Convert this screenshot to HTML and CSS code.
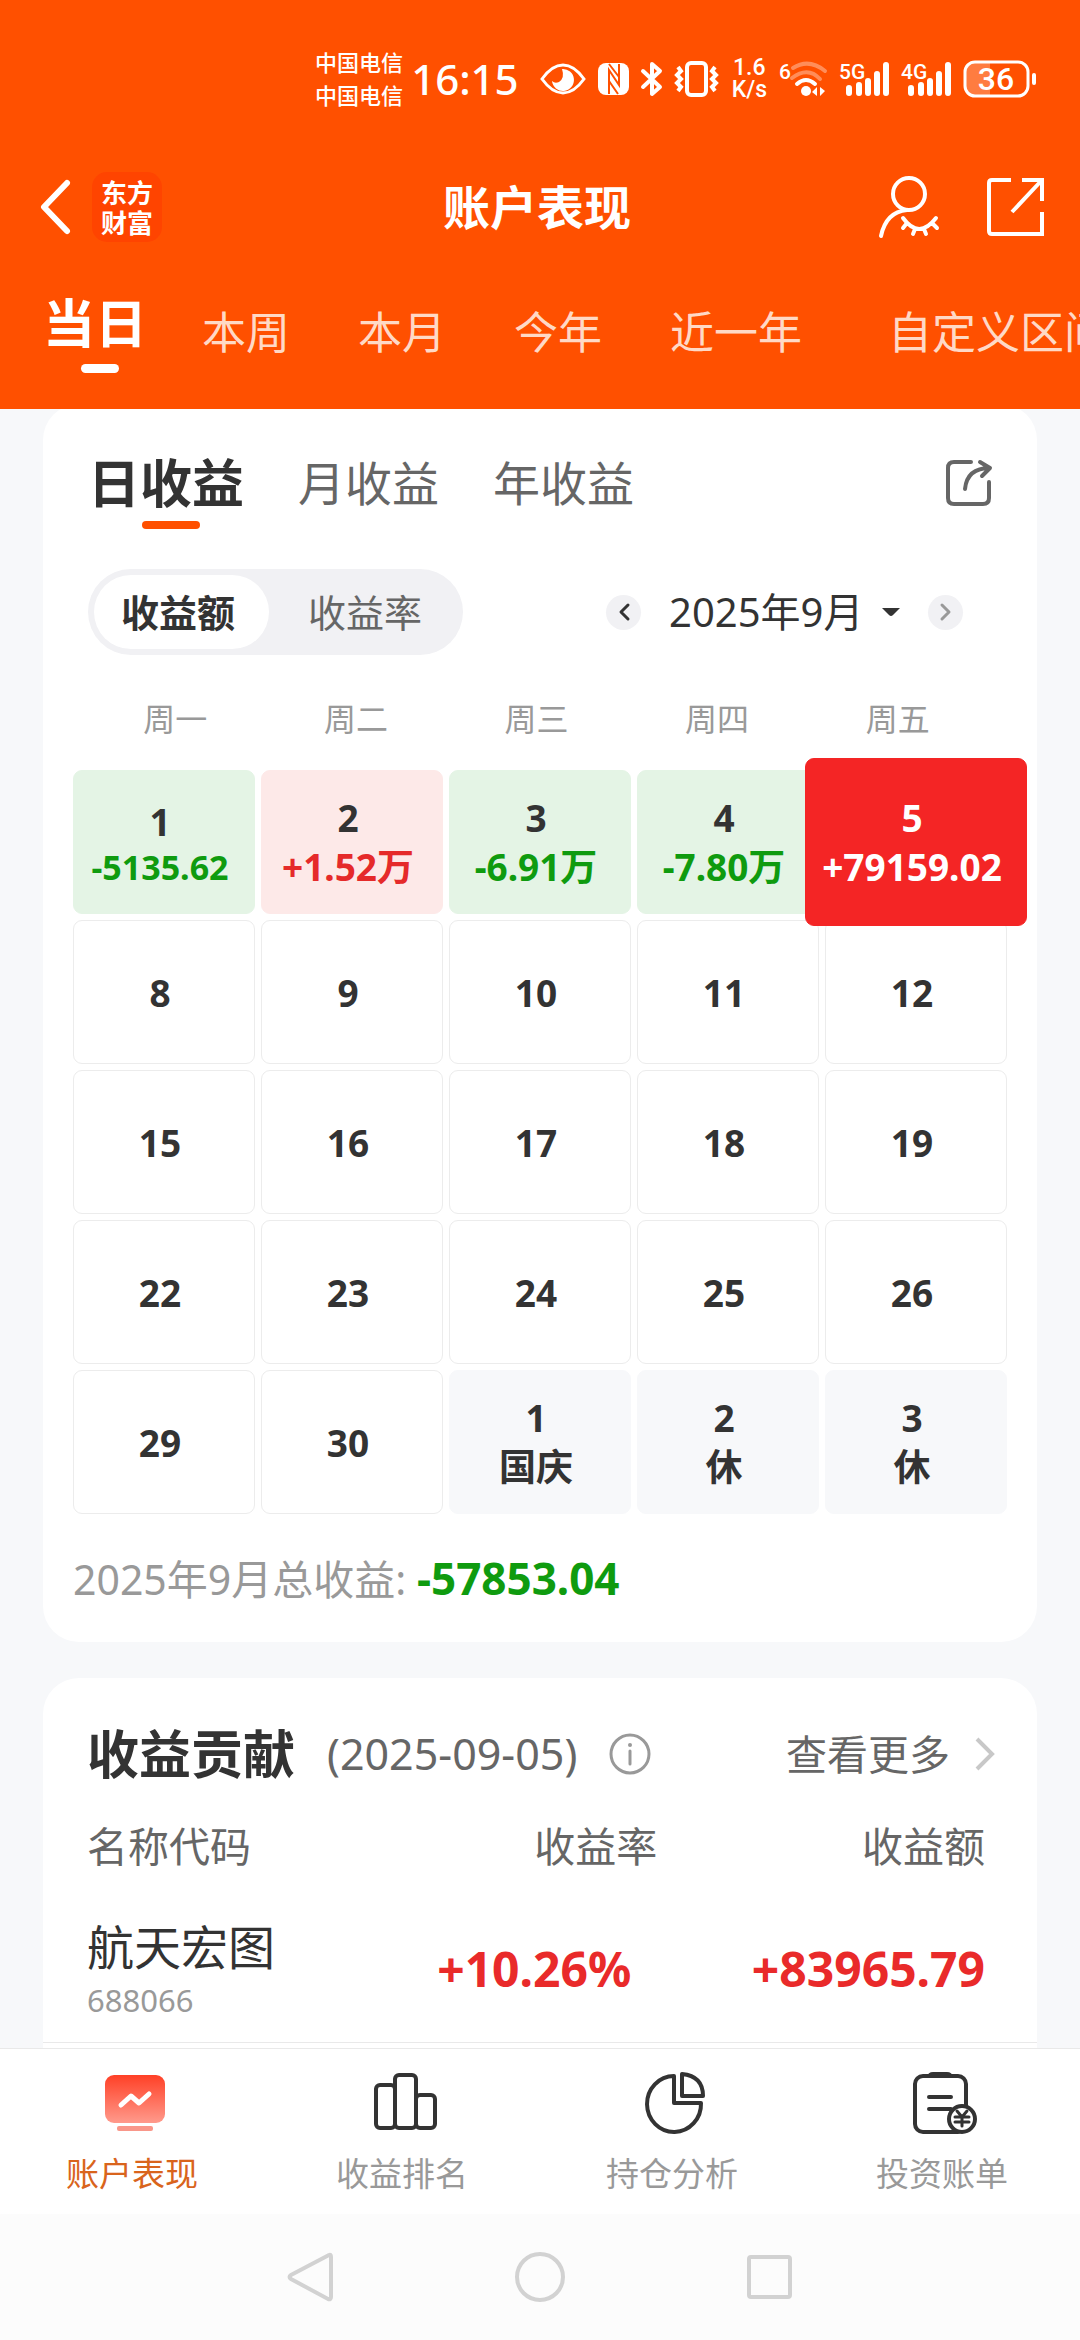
FILE: index.html
```html
<!DOCTYPE html>
<html lang="zh-CN">
<head>
<meta charset="utf-8">
<meta name="viewport" content="width=device-width, initial-scale=1">
<title>账户表现</title>
<link rel="stylesheet" href="styles.css">
</head>
<body>
<header class="header">
  <div class="status">
    <div class="carriers"><span>中国电信</span><span>中国电信</span></div>
    <time class="clock">16:15</time>
    <svg class="st-eye" width="46" height="32" viewBox="0 0 46 32"><path d="M2 16Q12 2 23 2T44 16Q34 30 23 30T2 16Z" fill="none" stroke="#fff" stroke-width="3"/><path d="M22 6a11 11 0 1 1-10 12q3 3 7 1q6-4 3-13z" fill="#fff"/></svg>
    <svg class="st-nfc" width="31" height="32" viewBox="0 0 31 32"><rect width="31" height="32" rx="8" fill="#fff"/><path d="M11 31V7L21 22V1" fill="none" stroke="#ff5000" stroke-width="2"/><path d="M11 1L21 14M11 18L20 31" fill="none" stroke="#ff5000" stroke-width="2"/></svg>
    <svg class="st-bt" width="22" height="36" viewBox="0 0 22 36"><path d="M2 10L19 26L11 33V3L19 10L2 26" fill="none" stroke="#fff" stroke-width="4" stroke-linejoin="round" stroke-linecap="round"/></svg>
    <svg class="st-vib" width="43" height="36" viewBox="0 0 43 36"><rect x="12" y="2" width="19" height="32" rx="4" fill="none" stroke="#fff" stroke-width="4"/><path d="M3 6L6 10L2 14L6 18L2 22L6 26L3 30M40 6L37 10L41 14L37 18L41 22L37 26L40 30" fill="none" stroke="#fff" stroke-width="4"/></svg>
    <div class="speed"><span>1.6</span><span>K/s</span></div>
    <svg class="st-wifi" width="48" height="36" viewBox="0 0 48 36"><text x="0" y="18" class="sig-text">6</text><g fill="none" stroke="#fff" stroke-width="4" stroke-linecap="round"><path d="M14 7Q30-3 46 10" opacity=".35"/><path d="M13 17Q29 5 41 18" opacity=".35"/><path d="M18 23Q27 15 36 23"/></g><circle cx="27" cy="30" r="5" fill="#fff"/><path d="M38 26V35L33 31ZM41 26V35L46 30Z" fill="#fff"/></svg>
    <svg class="st-sig" width="50" height="36" viewBox="0 0 50 36"><text x="0" y="18" class="sig-text">5G</text><path d="M10 27V32M20 24V32M29 20V32M38 13V32M47 4V32" stroke="#fff" stroke-width="6" stroke-linecap="round"/></svg>
    <svg class="st-sig" width="50" height="36" viewBox="0 0 50 36"><text x="0" y="18" class="sig-text">4G</text><path d="M10 27V32M20 24V32M29 20V32M38 13V32M47 4V32" stroke="#fff" stroke-width="6" stroke-linecap="round"/></svg>
    <svg class="st-bat" width="73" height="38" viewBox="0 0 73 38"><path d="M11 2H27V36H11Q2 36 2 27V11Q2 2 11 2Z" fill="#fff" opacity=".25"/><rect x="2" y="2" width="63" height="34" rx="10" fill="none" stroke="#fff" stroke-width="3"/><rect x="69" y="13" width="4" height="12" rx="2" fill="#fff"/><text x="33" y="30" text-anchor="middle" class="bat-text">36</text></svg>
  </div>
  <div class="titlebar">
    <div class="title-left">
      <button class="plain" aria-label="返回"><svg width="31" height="54" viewBox="0 0 31 54"><path d="M27 3L4 27L27 51" fill="none" stroke="#fff" stroke-width="6" stroke-linecap="round" stroke-linejoin="round"/></svg></button>
      <span class="logo"><span>东方</span><span>财富</span></span>
    </div>
    <h1 class="title">账户表现</h1>
    <div class="title-right">
      <button class="plain" aria-label="隐藏账户"><svg width="60" height="62" viewBox="0 0 60 62"><g fill="none" stroke="#fff" stroke-width="4" stroke-linecap="round"><circle cx="30" cy="18" r="16"/><path d="M2 60Q7 36 28 34"/><path d="M24 42Q40 64 57 42M28 47L24 52M36 53L34 58M45 53L47 58M53 47L58 52"/></g></svg></button>
      <button class="plain" aria-label="分享"><svg width="57" height="60" viewBox="0 0 57 60"><path d="M24 3H5Q2 3 2 6V54Q2 57 5 57H55V35M35 3H55V24M55 3L25 35" fill="none" stroke="#fff" stroke-width="4"/></svg></button>
    </div>
  </div>
  <nav class="periods">
    <button class="period period-on">当日</button>
    <button class="period">本周</button>
    <button class="period">本月</button>
    <button class="period">今年</button>
    <button class="period">近一年</button>
    <button class="period period-custom">自定义区间</button>
  </nav>
</header>

<main class="main">
  <section class="card calendar">
    <div class="scope">
      <button class="scope-tab scope-on">日收益</button>
      <button class="scope-tab">月收益</button>
      <button class="scope-tab">年收益</button>
      <button class="plain scope-share" aria-label="分享日历"><svg width="46" height="46" viewBox="0 0 46 46"><path d="M25 2H8Q2 2 2 8V38Q2 44 8 44H37Q43 44 43 38V22M19 29Q21 8 44 8M34 2L44 8L36 16" fill="none" stroke="#666" stroke-width="4" stroke-linecap="round" stroke-linejoin="round"/></svg></button>
    </div>
    <div class="controls">
      <div class="segment">
        <button class="seg seg-on">收益额</button>
        <button class="seg">收益率</button>
      </div>
      <div class="month">
        <button class="round" aria-label="上个月"><svg width="12" height="18" viewBox="0 0 12 18"><path d="M10 2L3 9L10 16" fill="none" stroke="#333" stroke-width="3" stroke-linecap="round" stroke-linejoin="round"/></svg></button>
        <label class="picker">
          <select class="month-select" aria-label="月份">
            <option>2025年7月</option>
            <option>2025年8月</option>
            <option selected>2025年9月</option>
          </select>
          <svg width="18" height="8" viewBox="0 0 18 8"><path d="M0 0H18L11 7Q9 9 7 7Z" fill="#333"/></svg>
        </label>
        <button class="round" aria-label="下个月"><svg width="12" height="18" viewBox="0 0 12 18"><path d="M2 2L9 9L2 16" fill="none" stroke="#999" stroke-width="3" stroke-linecap="round" stroke-linejoin="round"/></svg></button>
      </div>
    </div>
    <div class="weekdays"><span>周一</span><span>周二</span><span>周三</span><span>周四</span><span>周五</span></div>
    <div class="days">
      <button class="day loss"><span>1</span><span class="amount small">-5135.62</span></button>
      <button class="day gain"><span>2</span><span class="amount">+1.52万</span></button>
      <button class="day loss"><span>3</span><span class="amount">-6.91万</span></button>
      <button class="day loss"><span>4</span><span class="amount">-7.80万</span></button>
      <button class="day picked"><span>5</span><span class="amount">+79159.02</span></button>
      <button class="day">8</button>
      <button class="day">9</button>
      <button class="day">10</button>
      <button class="day">11</button>
      <button class="day">12</button>
      <button class="day">15</button>
      <button class="day">16</button>
      <button class="day">17</button>
      <button class="day">18</button>
      <button class="day">19</button>
      <button class="day">22</button>
      <button class="day">23</button>
      <button class="day">24</button>
      <button class="day">25</button>
      <button class="day">26</button>
      <button class="day">29</button>
      <button class="day">30</button>
      <button class="day rest"><span>1</span><span>国庆</span></button>
      <button class="day rest"><span>2</span><span>休</span></button>
      <button class="day rest"><span>3</span><span>休</span></button>
    </div>
    <p class="total">2025年9月总收益: <strong>-57853.04</strong></p>
  </section>

  <section class="card contribution">
    <div class="contrib-head">
      <h2 class="contrib-title">收益贡献</h2>
      <span class="contrib-date">(2025-09-05)</span>
      <button class="plain" aria-label="说明"><svg width="42" height="42" viewBox="0 0 42 42"><circle cx="21" cy="21" r="19" fill="none" stroke="#999" stroke-width="3"/><path d="M21 18V31" stroke="#999" stroke-width="3" stroke-linecap="round"/><circle cx="21" cy="12" r="2" fill="#999"/></svg></button>
      <a class="more" href="#">查看更多<svg width="22" height="34" viewBox="0 0 22 34"><path d="M3 2L18 17L3 32" fill="none" stroke="#c8c8c8" stroke-width="4"/></svg></a>
    </div>
    <table class="stocks">
      <thead><tr><th class="c-name">名称代码</th><th class="c-rate">收益率</th><th class="c-amt">收益额</th></tr></thead>
      <tbody><tr><td class="c-name"><span class="stock">航天宏图</span><span class="code">688066</span></td><td class="c-rate">+10.26%</td><td class="c-amt">+83965.79</td></tr></tbody>
    </table>
  </section>
</main>

<footer class="footer">
  <nav class="tabbar">
    <a class="tab tab-on" href="#"><svg width="64" height="64" viewBox="0 0 64 64"><defs><linearGradient id="screen" x1="0" y1="0" x2="0" y2="1"><stop offset="0" stop-color="#ff4026"/><stop offset="1" stop-color="#ff9a8c"/></linearGradient></defs><rect x="2" y="3" width="60" height="48" rx="9" fill="url(#screen)"/><path d="M18 33L28 24L36 31L46 22" fill="none" stroke="#fff" stroke-width="5" stroke-linecap="round" stroke-linejoin="round"/><rect x="14" y="54" width="36" height="5" rx="2" fill="#f9978a"/></svg><span>账户表现</span></a>
    <a class="tab" href="#"><svg width="64" height="64" viewBox="0 0 64 64"><g fill="none" stroke="#333" stroke-width="4"><rect x="3" y="13" width="19" height="43" rx="4"/><rect x="22" y="3" width="21" height="53" rx="4"/><rect x="43" y="23" width="19" height="33" rx="4"/></g></svg><span>收益排名</span></a>
    <a class="tab" href="#"><svg width="64" height="64" viewBox="0 0 64 64"><g fill="none" stroke="#333" stroke-width="4" stroke-linejoin="round"><path d="M31 4A27 28 0 1 0 58 31H31Z"/><path d="M39 2V24H60Q60 4 39 2Z"/></g></svg><span>持仓分析</span></a>
    <a class="tab" href="#"><svg width="64" height="64" viewBox="0 0 64 64"><rect x="2" y="4" width="51" height="56" rx="8" fill="none" stroke="#333" stroke-width="4"/><path d="M14 5Q15 0 20 0H34Q39 0 40 5Z" fill="#333"/><path d="M16 25H38M16 37H38" stroke="#333" stroke-width="4" stroke-linecap="round"/><circle cx="49" cy="47" r="13" fill="#fff" stroke="#333" stroke-width="4"/><path d="M44 39L49 45L54 39M49 45V54M42 45H56M42 50H56" fill="none" stroke="#333" stroke-width="3" stroke-linecap="round"/></svg><span>投资账单</span></a>
  </nav>
  <nav class="sysnav">
    <button class="plain" aria-label="返回"><svg width="50" height="50" viewBox="0 0 50 50"><path d="M44 3Q46 2 46 5V45Q46 48 43 47L6 27Q3 25 6 23Z" fill="none" stroke="#d2d2d2" stroke-width="4"/></svg></button>
    <button class="plain" aria-label="主页"><svg width="50" height="50" viewBox="0 0 50 50"><circle cx="25" cy="25" r="23" fill="none" stroke="#d2d2d2" stroke-width="4"/></svg></button>
    <button class="plain" aria-label="最近任务"><svg width="50" height="50" viewBox="0 0 50 50"><rect x="4" y="5" width="41" height="40" rx="2" fill="none" stroke="#d2d2d2" stroke-width="4"/></svg></button>
  </nav>
</footer>
</body>
</html>
```

FILE: styles.css
```css
* { box-sizing: border-box; }
body {
  margin: 0;
  min-height: 100vh;
  display: flex;
  flex-direction: column;
  overflow-x: hidden;
  background: #f7f8fa;
  color: #333;
  font-family: "Noto Sans", "Noto Sans CJK SC", sans-serif;
  line-height: 60px;
}
h1, h2, p { margin: 0; }
button, select {
  margin: 0;
  padding: 0;
  border: 0;
  background: none;
  color: inherit;
  font: inherit;
}
a { color: inherit; text-decoration: none; }
svg { display: block; flex: none; overflow: visible; }
.plain { display: flex; }

/* header */
.header {
  position: relative;
  z-index: 1;
  background: #ff5000;
  color: #fff;
  padding-bottom: 36px;
  overflow: hidden;
}
.status {
  display: flex;
  align-items: center;
  justify-content: flex-end;
  padding: 46px 44px 0 0;
}
.carriers, .speed { display: flex; flex-direction: column; }
.carriers { font-size: 22px; line-height: 33px; font-weight: 500; }
.clock { margin-left: 8px; font-size: 42px; line-height: 66px; font-weight: 500; }
.st-eye { margin-left: 21px; }
.st-nfc { margin-left: 12px; }
.st-bt { margin-left: 12px; }
.st-vib { margin-left: 12px; }
.speed {
  margin-left: 14px;
  font-family: Roboto, sans-serif;
  font-size: 23px;
  font-weight: 500;
  line-height: 22px;
  text-align: center;
}
.st-wifi { margin-left: 12px; }
.st-sig { margin-left: 12px; }
.st-bat { margin-left: 12px; }
.sig-text { font: 500 21px Roboto, sans-serif; fill: #fff; }
.bat-text { font: 500 32px Roboto, sans-serif; fill: #fff; }
.titlebar {
  display: grid;
  grid-template-columns: 1fr auto 1fr;
  align-items: center;
  padding: 60px 36px 0 40px;
}
.title-left, .title-right { display: flex; align-items: center; }
.title-left { gap: 21px; }
.title-right { justify-content: flex-end; gap: 48px; }
.logo {
  display: flex;
  flex-direction: column;
  padding: 5px 9px;
  border-radius: 15px;
  background: #ff4400;
  font-family: "Noto Sans CJK SC", sans-serif;
  font-size: 26px;
  line-height: 30px;
  font-weight: 700;
}
.title { padding-right: 10px; font-size: 47px; font-weight: 700; }
.periods {
  display: flex;
  align-items: flex-start;
  padding: 51px 0 0 32px;
}
.period {
  flex: none;
  padding: 9px 34px 0;
  font-size: 44px;
  color: #ffd9c6;
}
.period-custom { padding-left: 52px; }
.period-on {
  display: flex;
  flex-direction: column;
  align-items: center;
  gap: 11px;
  padding: 0 21px 0 11px;
  color: #fff;
  font-size: 52px;
  font-weight: 700;
}
.period-on::after {
  content: "";
  width: 38px;
  height: 9px;
  margin-left: 10px;
  border-radius: 5px;
  background: #fff;
}

/* cards */
.main {
  flex: 1;
  display: flex;
  flex-direction: column;
  gap: 36px;
  margin-top: -5px;
  padding: 0 43px;
}
.card { background: #fff; border-radius: 36px; }
.calendar { padding: 49px 30px 33px; }
.scope {
  display: flex;
  align-items: flex-start;
  gap: 54px;
  padding: 0 15px;
}
.scope-tab { font-size: 47px; color: #666; }
.scope-on {
  display: flex;
  flex-direction: column;
  align-items: center;
  gap: 8px;
  color: #333;
  font-size: 52px;
  font-weight: 700;
}
.scope-on::after {
  content: "";
  width: 58px;
  height: 8px;
  margin-left: 10px;
  border-radius: 4px;
  background: #ff5000;
}
.scope-share { margin: 7px 0 0 auto; }
.controls {
  display: flex;
  align-items: center;
  justify-content: space-between;
  margin-top: 40px;
  padding: 0 44px 0 15px;
}
.segment {
  display: flex;
  padding: 6px;
  border-radius: 43px;
  background: #f1f1f4;
}
.seg {
  height: 74px;
  padding: 0 35px 0 39px;
  border-radius: 37px;
  font-size: 38px;
  color: #666;
}
.seg-on { padding: 0 34px 0 27px; background: #fff; color: #333; font-weight: 700; }
.month { display: flex; align-items: center; gap: 28px; }
.round {
  display: flex;
  align-items: center;
  justify-content: center;
  width: 35px;
  height: 35px;
  border-radius: 50%;
  background: #f1f1f4;
}
.picker { display: flex; align-items: center; gap: 18px; }
.month-select { appearance: none; font-size: 40px; color: #333; }
.weekdays {
  display: grid;
  grid-template-columns: repeat(5, 1fr);
  margin-top: 44px;
  padding: 0 19px 0 12px;
  color: #999;
  font-size: 32px;
  line-height: 40px;
  text-align: center;
}
.days {
  display: grid;
  grid-template-columns: repeat(5, 1fr);
  grid-auto-rows: 144px;
  gap: 6px;
  margin-top: 31px;
}
.day {
  display: flex;
  flex-direction: column;
  align-items: center;
  justify-content: center;
  padding-right: 8px;
  border: 1px solid #ececec;
  border-radius: 9px;
  font-size: 37px;
  line-height: 49px;
  font-weight: 700;
  white-space: nowrap;
}
.small { font-size: 34px; line-height: 42px; }
.loss { background: #e4f4e5; border-color: #e4f4e5; }
.loss .amount { color: #0f9b0f; }
.gain { background: #fde9e8; border-color: #fde9e8; }
.gain .amount { color: #e52a2a; }
.rest { background: #f7f8fa; border-color: #f7f8fa; }
.picked {
  z-index: 1;
  margin: -12px -20px;
  border-color: #f42525;
  background: #f42525;
  color: #fff;
}
.total { margin-top: 35px; color: #999; font-size: 41px; }
.total strong { color: #0f9b0f; font-size: 44px; line-height: 40px; }

/* contribution */
.contribution {
  flex: 1;
  padding: 46px 0 5px;
  border-radius: 36px 36px 0 0;
}
.contrib-head {
  display: flex;
  align-items: center;
  padding: 0 41px 0 44px;
}
.contrib-title { font-size: 52px; font-weight: 700; }
.contrib-date { margin: 0 32px; color: #666; font-size: 43px; }
.more {
  display: flex;
  align-items: center;
  gap: 24px;
  margin-left: auto;
  color: #666;
  font-size: 41px;
}
.stocks {
  width: 100%;
  margin-top: 32px;
  border-spacing: 0;
  table-layout: fixed;
}
.stocks th {
  padding: 0 2px 16px;
  color: #666;
  font-size: 41px;
  font-weight: 400;
  text-align: right;
}
.stocks td {
  padding: 20px 28px 16px 0;
  border-bottom: 1px solid #e9e9e9;
  color: #e92a2a;
  font-size: 48px;
  font-weight: 700;
  text-align: right;
}
.stocks .c-name { width: 36%; padding-left: 44px; text-align: left; }
.stocks td.c-name { padding-top: 28px; font-weight: 400; }
.stocks th.c-rate { width: 26%; }
.stocks .c-amt { padding-right: 52px; }
.stock, .code { display: block; }
.stock { color: #333; font-size: 47px; line-height: 54px; }
.code { color: #999; font-size: 31px; line-height: 52px; }

/* bottom bars */
.tabbar {
  display: grid;
  grid-template-columns: repeat(4, 1fr);
  padding: 23px 0 20px;
  border-top: 1px solid #e9e9e9;
  background: #fff;
}
.tab {
  display: flex;
  flex-direction: column;
  align-items: center;
  gap: 18px;
  color: #999;
  font-size: 33px;
  line-height: 40px;
}
.tab span { padding-right: 6px; }
.tab-on { color: #d9641c; }
.sysnav {
  display: flex;
  justify-content: center;
  gap: 180px;
  padding: 38px 0;
  background: #fcfcfc;
}
```
